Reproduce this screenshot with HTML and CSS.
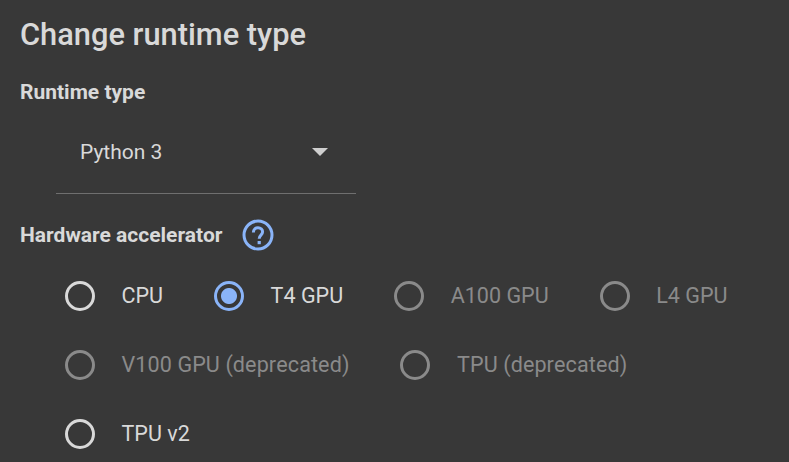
FILE: index.html
```html
<!DOCTYPE html>
<html lang="en">
<head>
<meta charset="utf-8">
<title>Change runtime type</title>
<link rel="stylesheet" href="styles.css">
</head>
<body>
<main class="dialog">
  <h1 class="title">Change runtime type</h1>
  <h2 class="section-label">Runtime type</h2>
  <div class="select">
    <span>Python 3</span>
    <span class="caret"></span>
  </div>
  <div class="hardware-head">
    <h2 class="section-label">Hardware accelerator</h2>
    <svg class="help" width="34" height="34" viewBox="0 0 34 34" aria-hidden="true">
      <circle cx="17" cy="17" r="14" fill="none" stroke="#8ab4f8" stroke-width="3"/>
      <path d="M12.4 14.4c0-2.9 2-4.7 4.6-4.7s4.6 1.7 4.6 4.1c0 3.4-3.4 3.3-3.4 6.9" fill="none" stroke="#8ab4f8" stroke-width="3"/>
      <rect x="16.6" y="23" width="3.2" height="3.2" fill="#8ab4f8"/>
    </svg>
  </div>
  <div class="radios">
    <label class="radio"><input type="radio" name="hw"><span>CPU</span></label>
    <label class="radio"><input type="radio" name="hw" checked><span>T4 GPU</span></label>
    <label class="radio is-disabled"><input type="radio" name="hw" disabled><span>A100 GPU</span></label>
    <label class="radio is-disabled"><input type="radio" name="hw" disabled><span>L4 GPU</span></label>
    <label class="radio is-disabled is-deprecated"><input type="radio" name="hw" disabled><span>V100 GPU (deprecated)</span></label>
    <label class="radio is-disabled is-deprecated"><input type="radio" name="hw" disabled><span>TPU (deprecated)</span></label>
    <label class="radio"><input type="radio" name="hw"><span>TPU v2</span></label>
  </div>
</main>
</body>
</html>
```
FILE: styles.css
```css
html, body {
  margin: 0;
  height: 100%;
  overflow: hidden;
  background: #383838;
}

.dialog {
  padding: 17px 0 0 20px;
  color: #d9d9d9;
  font-family: Roboto, "Liberation Sans", sans-serif;
  font-size: 21px;
}

.title {
  margin: 0;
  font-size: 30.8px;
  font-weight: 500;
  line-height: 36px;
}

.section-label {
  margin: 0;
  font-size: 21px;
  font-weight: 700;
  line-height: 28px;
}

.dialog > .section-label {
  margin-top: 25px;
}

.select {
  box-sizing: border-box;
  display: flex;
  justify-content: space-between;
  align-items: center;
  width: 300px;
  height: 72px;
  margin: 16px 0 0 36px;
  padding: 0 28px 11px 24px;
  border-bottom: 1px solid #6f6f6f;
  line-height: 28px;
}

.caret {
  width: 0;
  height: 0;
  border-left: 8px solid transparent;
  border-right: 8px solid transparent;
  border-top: 8px solid #cfcfcf;
}

.hardware-head {
  display: flex;
  align-items: center;
  gap: 18.5px;
  height: 34px;
  margin-top: 24px;
}

.radios {
  display: flex;
  flex-wrap: wrap;
  gap: 39px 51px;
  margin: 29px 0 0 45px;
  font-size: 21.56px;
  font-kerning: none;
}

.radio {
  display: flex;
  align-items: center;
  gap: 26.5px;
  height: 30px;
  line-height: 30px;
}

.radio input {
  appearance: none;
  box-sizing: border-box;
  width: 30px;
  height: 30px;
  margin: 0;
  border: 3px solid #d9d9d9;
  border-radius: 50%;
  background: transparent;
}

.radio input:checked {
  border-color: #8ab4f8;
  background: radial-gradient(circle, #8ab4f8 0 7.5px, transparent 8.5px);
}

.is-disabled {
  color: #8a8a8a;
}

.is-disabled input {
  border-color: #8a8a8a;
}

.is-deprecated {
  letter-spacing: 0.1px;
}
```
